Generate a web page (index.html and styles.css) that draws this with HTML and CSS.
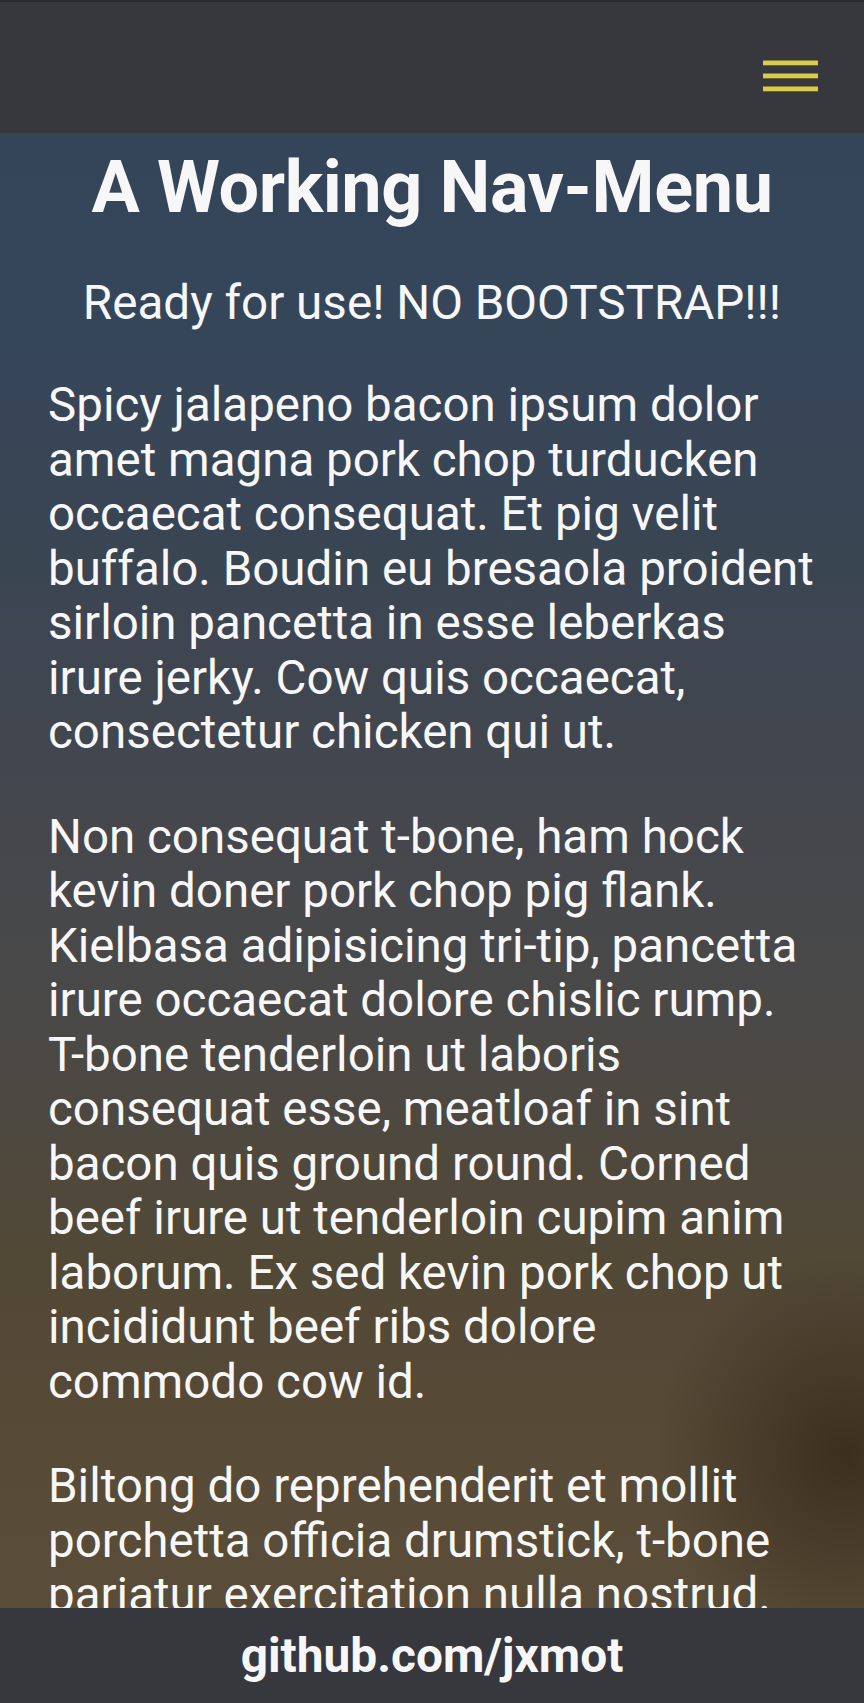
FILE: index.html
```html
<!DOCTYPE html>
<html lang="en">
<head>
<meta charset="utf-8">
<title>A Working Nav-Menu</title>
<link rel="stylesheet" href="styles.css">
</head>
<body>
<header class="topbar">
  <button class="burger" aria-label="menu">
    <span class="bar"></span>
    <span class="bar"></span>
    <span class="bar"></span>
  </button>
</header>
<main class="content">
  <h1 class="title">A Working Nav-Menu</h1>
  <p class="subtitle">Ready for use! NO BOOTSTRAP!!!</p>
  <p class="para">Spicy jalapeno bacon ipsum dolor amet magna pork chop turducken occaecat consequat. Et pig velit buffalo. Boudin eu bresaola proident sirloin pancetta in esse leberkas irure jerky. Cow quis occaecat, consectetur chicken qui ut.</p>
  <p class="para">Non consequat t-bone, ham hock kevin doner pork chop pig flank. Kielbasa adipisicing tri-tip, pancetta irure occaecat dolore chislic rump. T-bone tenderloin ut laboris consequat esse, meatloaf in sint bacon quis ground round. Corned beef irure ut tenderloin cupim anim laborum. Ex sed kevin pork chop ut incididunt beef ribs dolore commodo cow id.</p>
  <p class="para">Biltong do reprehenderit et mollit porchetta officia drumstick, t-bone pariatur exercitation nulla nostrud.</p>
</main>
<footer class="bottombar">github.com/jxmot</footer>
</body>
</html>
```

FILE: styles.css
```css
html, body {
  margin: 0;
  padding: 0;
  height: 100%;
}
body {
  display: flex;
  flex-direction: column;
  height: 1703px;
  overflow: hidden;
  font-family: Roboto, "Noto Sans", sans-serif;
  color: #f7f7f7;
  background:
    radial-gradient(ellipse 190px 200px at 845px 1455px, rgba(52,40,24,0.8), rgba(52,40,24,0) 100%),
    linear-gradient(180deg, #334459 0%, #35465a 18%, #3a4553 32%, #45474d 48%, #4a4947 60%, #524836 74%, #584b37 88%, #5a4d39 100%);
}
.topbar {
  flex: 0 0 auto;
  height: 131px;
  background: #37383d;
  border-top: 2px solid #2a2b2f;
  display: flex;
  justify-content: flex-end;
  align-items: flex-start;
  padding: 0 46px 0 0;
}
.burger {
  margin-top: 58px;
  width: 55px;
  padding: 0;
  border: 0;
  background: transparent;
  display: flex;
  flex-direction: column;
  gap: 7px;
}
.bar {
  display: block;
  height: 4px;
  background: #d7cc4e;
  border-top: 0.5px solid #8a7f36;
  border-bottom: 0.5px solid #6d6430;
}
.content {
  flex: 1 1 auto;
  overflow: hidden;
  padding: 0 48px;
}
.title {
  margin: 5px 0 0;
  font-size: 72px;
  font-weight: 700;
  line-height: 100px;
  text-align: center;
  letter-spacing: -0.4px;
}
.subtitle {
  margin: 37px 0 0;
  font-size: 47.6px;
  line-height: 56px;
  text-align: center;
  font-weight: 400;
}
.para {
  margin: 47px 0 0;
  font-size: 47.5px;
  line-height: 54.5px;
}
.para + .para {
  margin-top: 50px;
}
.bottombar {
  flex: 0 0 95px;
  background: #37383d;
  display: flex;
  align-items: center;
  justify-content: center;
  font-size: 47.8px;
  font-weight: 700;
  color: #f7f7f7;
}
```
